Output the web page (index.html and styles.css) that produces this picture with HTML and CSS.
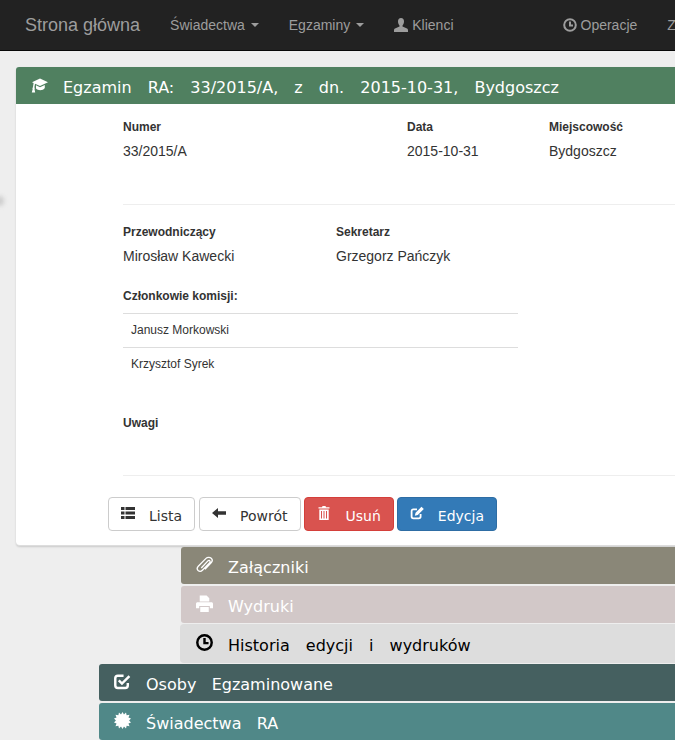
FILE: index.html
```html
<!DOCTYPE html>
<html lang="pl">
<head>
  <meta charset="UTF-8">
  <title>Egzamin RA</title>
  <link rel="stylesheet" href="styles.css">
</head>
<body>
  <nav class="navbar">
    <a class="brand">Strona główna</a>
    <a class="nav-link nav-first">Świadectwa <span class="caret"></span></a>
    <a class="nav-link">Egzaminy <span class="caret"></span></a>
    <a class="nav-link">
      <svg class="nav-icon" viewBox="0 0 14 14"><path d="M7 0C5 0 4 1.500 4 3.500C4 5.500 5 7 5.500 7.500L5.500 8.500L1 10.500C0.300 10.800 0 11.500 0 12.500L0 14L14 14L14 12.500C14 11.500 13.700 10.800 13 10.500L8.500 8.500L8.500 7.500C9 7 10 5.500 10 3.500C10 1.500 9 0 7 0Z"/></svg>
      Klienci
    </a>
    <a class="nav-link nav-right">
      <svg class="nav-icon" viewBox="0 0 14 14"><circle class="ring" cx="7" cy="7" r="5.800"/><path class="hand" d="M7 3.500V7.400H10"/></svg>
      Operacje
    </a>
    <a class="nav-link">Zarządzanie</a>
  </nav>

  <div class="side-mark"></div>

  <div class="page">
    <section class="panel">
      <h3 class="panel-heading heading-main wide-words">
        <svg class="head-icon" viewBox="0 0 17 15"><path d="M9 0.500L17 4.300L9 8L4 5.800L3.400 9.600C3.900 10 3.900 10.600 3.500 11L4.200 14.500L0.800 14.500L1.700 11C1.300 10.600 1.300 10 1.900 9.600L2.600 5.100L1 4.300Z"/><path d="M5 7.200L9 9.200L13.800 7L13.800 10C12 12.800 7 12.800 5 10.500Z"/></svg>
        Egzamin RA: 33/2015/A, z dn. 2015-10-31, Bydgoszcz
      </h3>
      <div class="panel-body">
        <div class="details">
          <div class="info-row row-top">
            <div class="field field-numer"><div class="label">Numer</div><div class="value">33/2015/A</div></div>
            <div class="field field-data"><div class="label">Data</div><div class="value">2015-10-31</div></div>
            <div class="field"><div class="label">Miejscowość</div><div class="value">Bydgoszcz</div></div>
          </div>
          <hr class="divider">
          <div class="info-row row-people">
            <div class="field field-chair"><div class="label">Przewodniczący</div><div class="value">Mirosław Kawecki</div></div>
            <div class="field"><div class="label">Sekretarz</div><div class="value">Grzegorz Pańczyk</div></div>
          </div>
          <div class="label label-members">Członkowie komisji:</div>
          <table class="members">
            <tr><td>Janusz Morkowski</td></tr>
            <tr><td>Krzysztof Syrek</td></tr>
          </table>
          <div class="label label-notes">Uwagi</div>
          <hr class="divider divider-notes">
        </div>
        <div class="actions">
          <button class="btn btn-default btn-list">
            <svg class="btn-icon" viewBox="0 0 14 12"><path d="M0 0H3.500V3H0ZM4.500 0H14V3H4.500ZM0 4.500H3.500V7.500H0ZM4.500 4.500H14V7.500H4.500ZM0 9H3.500V12H0ZM4.500 9H14V12H4.500Z"/></svg>
            Lista
          </button>
          <button class="btn btn-default">
            <svg class="btn-icon" viewBox="0 0 14 12"><path d="M0 6L6 1V4.300H14V7.700H6V11Z"/></svg>
            Powrót
          </button>
          <button class="btn btn-danger">
            <svg class="btn-icon" viewBox="0 0 12 14"><path d="M4.500 0H7.500L8 1.200H11.500V2.400H0.500V1.200H4ZM1.300 3.400H10.700V14H1.300ZM3 5V12.600H4V5ZM5.500 5V12.600H6.500V5ZM8 5V12.600H9V5Z" fill-rule="evenodd"/></svg>
            Usuń
          </button>
          <button class="btn btn-primary">
            <svg class="btn-icon" viewBox="0 0 14 14"><path class="edit-box" d="M10.600 8V10.500C10.600 11.700 10 12.400 8.800 12.400H3.400C2.200 12.400 1.600 11.700 1.600 10.500V5.200C1.600 4 2.200 3.300 3.400 3.300H7"/><path d="M11.500 0.800L13.800 3.100L7.800 9L4.800 9.800L5.600 6.700Z"/></svg>
            Edycja
          </button>
        </div>
      </div>
    </section>

    <div class="stack-inner">
      <h3 class="panel-heading bar bar-files">
        <svg class="head-icon" viewBox="0 0 18 17"><path class="clip" d="M5.600 12.200L12.600 4.700C13.500 3.800 14.700 4.200 14.900 5.200C15 5.800 14.800 6.300 14.300 6.800L6.800 14.500C5.400 15.900 3.400 15.900 2.200 14.800C1 13.600 1.200 11.600 2.400 10.300L10.600 2C12 0.700 14.700 0.500 16.100 1.800C17.500 3.200 17.300 5.300 16 6.700L9.500 13.500"/></svg>
        Załączniki
      </h3>
      <h3 class="panel-heading bar bar-prints">
        <svg class="head-icon" viewBox="0 0 16 16"><path d="M3.500 0.500H10L12.500 3V6H3.500ZM1.500 6.800H14.500C15.400 6.800 16 7.400 16 8.300V12.500H13V10.300H3V12.500H0V8.300C0 7.400 0.600 6.800 1.500 6.800ZM4 11.300H12V16H4Z"/></svg>
        Wydruki
      </h3>
      <h3 class="panel-heading bar bar-history wide-words">
        <svg class="head-icon" viewBox="0 0 16 16"><circle class="ring" cx="8" cy="8" r="6.800"/><path class="hand" d="M8 3.800V8.600H11.800"/></svg>
        Historia edycji i wydruków
      </h3>
    </div>

    <div class="stack-outer">
      <h3 class="panel-heading bar bar-people">
        <svg class="head-icon" viewBox="0 0 16 16"><path class="box" d="M13 9.500V11.500C13 13.300 12.200 14.200 10.500 14.200H3.700C2 14.200 1.200 13.300 1.200 11.500V5C1.200 3.300 2 2.500 3.700 2.500H9"/><path class="box" d="M4.500 7L7.500 10L14.500 3"/></svg>
        Osoby Egzaminowane
      </h3>
      <h3 class="panel-heading bar bar-certs">
        <svg class="head-icon" viewBox="0 0 16 16"><path d="M8 0L9.400 2.400L11.300 .5L11.900 3.100L14.600 2.600L13.600 5.100L16 6.200L14.200 8L16 9.800L13.600 10.900L14.600 13.400L11.900 12.900L11.300 15.500L9.400 13.600L8 16L6.600 13.600L4.700 15.500L4.100 12.900L1.400 13.400L2.400 10.900L0 9.800L1.800 8L0 6.200L2.400 5.100L1.400 2.600L4.100 3.100L4.700 .5L6.600 2.400Z"/></svg>
        Świadectwa RA
      </h3>
    </div>
  </div>
</body>
</html>
```

FILE: styles.css
```css
html, body {
  height: 740px;
  overflow: hidden;
}
body {
  margin: 0;
  background-color: #eee;
  font-family: "Liberation Sans", Arial, sans-serif;
  font-size: 14px;
  line-height: 20px;
  color: #333;
}
.navbar {
  display: flex;
  align-items: center;
  height: 50px;
  padding-left: 25px;
  background-color: #222;
  border-bottom: 1px solid #080808;
  white-space: nowrap;
  overflow: hidden;
}
.brand {
  font-size: 18px;
  color: #9d9d9d;
}
.nav-link {
  display: flex;
  align-items: center;
  gap: 4px;
  flex: none;
  margin-left: 30px;
  color: #9d9d9d;
}
.nav-first {
  margin-left: 30px;
}
.nav-right {
  margin-left: 109px;
}
.caret {
  width: 0;
  height: 0;
  margin-left: 2px;
  border-top: 4px solid #9d9d9d;
  border-left: 4px solid transparent;
  border-right: 4px solid transparent;
}
.nav-icon {
  width: 14px;
  height: 14px;
  fill: #9d9d9d;
}
.nav-icon .ring, .nav-icon .hand {
  fill: none;
  stroke: #9d9d9d;
  stroke-width: 2;
}
.side-mark {
  position: absolute;
  left: -4px;
  top: 196px;
  width: 8px;
  height: 10px;
  border-radius: 50%;
  background: #ccc;
  filter: blur(2px);
}
.page {
  width: 720px;
  padding: 16px 0 0 16px;
}
.panel {
  background: #fff;
  border-radius: 4px;
  box-shadow: 0 1px 2px rgba(0, 0, 0, 0.15);
  border-bottom: 1px solid #ddd;
}
.panel-heading {
  box-sizing: border-box;
  display: flex;
  align-items: center;
  gap: 15px;
  height: 37px;
  margin: 0;
  padding: 4px 0 0 15px;
  font-family: "DejaVu Sans", sans-serif;
  font-size: 16px;
  font-weight: normal;
  word-spacing: 10.200px;
  border-radius: 3px 3px 0 0;
  white-space: nowrap;
}
.wide-words {
  word-spacing: 11px;
}
.heading-main {
  background-color: #508060;
  color: #fff;
}
.head-icon {
  width: 17px;
  height: 17px;
  margin-top: -5px;
  fill: currentColor;
}
.head-icon .ring, .head-icon .hand, .head-icon .box {
  fill: none;
  stroke: currentColor;
  stroke-width: 2.300;
}
.head-icon .clip {
  fill: none;
  stroke: currentColor;
  stroke-width: 1.400;
}
.panel-body {
  padding-bottom: 14px;
}
.details {
  padding: 15px 0 0 107px;
}
.info-row {
  display: flex;
}
.field-numer {
  width: 284px;
}
.field-data {
  width: 142px;
}
.field-chair {
  width: 213px;
}
.label {
  font-size: 12px;
  font-weight: bold;
  line-height: 17px;
}
.value {
  margin-top: 5px;
}
.divider {
  margin: 43px 0 0;
  border: 0;
  border-top: 1px solid #eee;
}
.row-people {
  margin-top: 19px;
}
.label-members {
  margin-top: 22px;
}
.members {
  width: 395px;
  margin-top: 8px;
  border-collapse: collapse;
  font-size: 12px;
}
.members td {
  height: 34px;
  padding: 0 8px 2px;
  border-top: 1px solid #ddd;
  box-sizing: border-box;
}
.label-notes {
  margin-top: 33px;
}
.divider-notes {
  margin-top: 43px;
}
.actions {
  display: flex;
  gap: 3px;
  margin: 21px 0 0 92px;
}
.btn {
  display: flex;
  align-items: center;
  gap: 14px;
  height: 34px;
  padding: 4px 12px 0;
  border: 1px solid #ccc;
  border-radius: 4px;
  font-family: "DejaVu Sans", sans-serif;
  font-size: 14px;
}
.btn-list {
  margin-right: 1px;
}
.btn-icon {
  width: 14px;
  height: 14px;
  margin-top: -6px;
  fill: currentColor;
}
.btn-icon .edit-box {
  fill: none;
  stroke: currentColor;
  stroke-width: 1.800;
}
.btn-default {
  background: #fff;
  color: #333;
}
.btn-danger {
  gap: 15px;
  background: #d9534f;
  border-color: #d43f3a;
  color: #fff;
}
.btn-primary {
  background: #337ab7;
  border-color: #2e6da4;
  color: #fff;
}
.stack-inner {
  margin: 1px 0 0 165px;
}
.bar {
  height: 37px;
  margin-bottom: 2px;
  padding-top: 6px;
  border-radius: 3px;
  color: #fff;
}
.bar .head-icon {
  margin-top: -7px;
}
.bar-files {
  background-color: #8a8778;
}
.bar-prints {
  background-color: #d2c8c8;
}
.bar-history {
  background-color: #ddd;
  color: #000;
  box-shadow: 0 0 0 1px #ddd;
}
.stack-outer {
  margin-left: 83px;
}
.bar-people {
  background-color: #456060;
}
.bar-certs {
  background-color: #508888;
}
```
